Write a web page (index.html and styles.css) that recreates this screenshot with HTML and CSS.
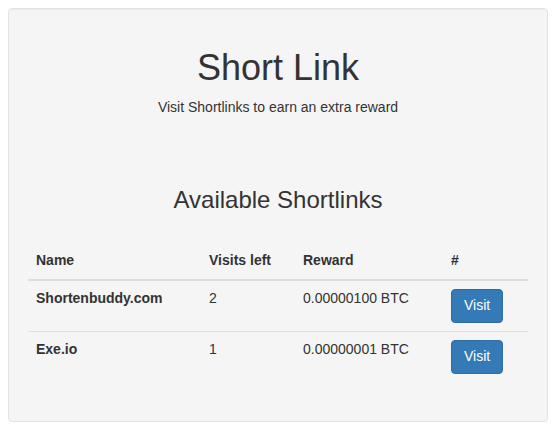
FILE: index.html
```html
<!DOCTYPE html>
<html lang="en">
<head>
  <meta charset="UTF-8" />
  <meta name="viewport" content="width=device-width, initial-scale=1.0"/>
  <title>Short Link</title>
  <link rel="stylesheet" href="styles.css">
</head>
<body>

<div class="well">
  <h1>Short Link</h1>
  <p>Visit Shortlinks to earn an extra reward</p>

  <h3>Available Shortlinks</h3>

  <table class="tabla">
    <colgroup>
      <col class="col-name">
      <col class="col-visits">
      <col class="col-reward">
      <col class="col-action">
    </colgroup>
    <thead>
      <tr>
        <th>Name</th>
        <th>Visits left</th>
        <th>Reward</th>
        <th>#</th>
      </tr>
    </thead>
    <tbody>
      <tr>
        <td><b>Shortenbuddy.com</b></td>
        <td>2</td>
        <td>0.00000100 BTC</td>
        <td><button class="btn">Visit</button></td>
      </tr>
      <tr>
        <td><b>Exe.io</b></td>
        <td>1</td>
        <td>0.00000001 BTC</td>
        <td><button class="btn">Visit</button></td>
      </tr>
    </tbody>
  </table>
</div>

</body>
</html>
```

FILE: styles.css
```css
body {
  font-family: "Liberation Sans", Arial, sans-serif;
  font-size: 14px;
  line-height: 1.42857;
  color: #333;
  background: #fff;
  margin: 8px;
}

.well {
  background: #f5f5f5;
  border: 1px solid #e3e3e3;
  border-radius: 4px;
  padding: 19px;
  box-shadow: inset 0 1px 1px rgba(0,0,0,0.05);
}

h1 {
  font-size: 36px;
  font-weight: 500;
  line-height: 1.1;
  text-align: center;
  margin: 20px 0 10px;
}

p {
  text-align: center;
  margin: 0 0 10px;
}

h3 {
  font-size: 24px;
  font-weight: 500;
  line-height: 1.1;
  text-align: center;
  margin: 69px 0 30px;
}

.tabla {
  width: 100%;
  border-collapse: collapse;
  border-spacing: 0;
  margin-bottom: 20px;
}

.col-name { width: 173px; }
.col-visits { width: 94px; }
.col-reward { width: 148px; }

.tabla th, .tabla td {
  padding: 8px;
  text-align: left;
  vertical-align: top;
  border-top: 1px solid #ddd;
}

.tabla th {
  border-top: 0;
  border-bottom: 2px solid #ddd;
  vertical-align: bottom;
  font-weight: bold;
}

.btn {
  font-family: inherit;
  font-size: 14px;
  line-height: 1.42857;
  padding: 6px 12px;
  color: #fff;
  background: #337ab7;
  border: 1px solid #2e6da4;
  border-radius: 4px;
  cursor: pointer;
}
```
